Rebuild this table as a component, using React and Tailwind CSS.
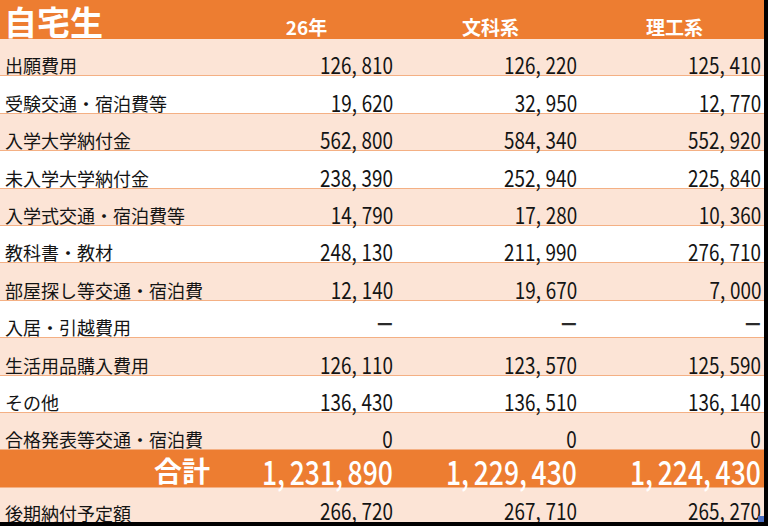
import React from "react";

const rows = [
  ["出願費用", "126,810", "126,220", "125,410"],
  ["受験交通・宿泊費等", "19,620", "32,950", "12,770"],
  ["入学大学納付金", "562,800", "584,340", "552,920"],
  ["未入学大学納付金", "238,390", "252,940", "225,840"],
  ["入学式交通・宿泊費等", "14,790", "17,280", "10,360"],
  ["教科書・教材", "248,130", "211,990", "276,710"],
  ["部屋探し等交通・宿泊費", "12,140", "19,670", "7,000"],
  ["入居・引越費用", "—", "—", "—"],
  ["生活用品購入費用", "126,110", "123,570", "125,590"],
  ["その他", "136,430", "136,510", "136,140"],
  ["合格発表等交通・宿泊費", "0", "0", "0"],
];

const jp = { fontFamily: '"Noto Sans CJK JP", "Noto Sans", sans-serif' };

function Spaced({ v }) {
  const parts = v.split(",");
  return parts.map((p, i) => (
    <React.Fragment key={i}>
      {p}
      {i < parts.length - 1 && <span className="mr-[6px]">,</span>}
    </React.Fragment>
  ));
}

function Num({ v, last }) {
  if (v === "—") {
    return (
      <div className="flex justify-end items-end pr-[3px] h-full pb-[4px]">
        <span className="inline-block origin-right scale-x-[0.72] text-[24px] leading-[24px] font-bold text-[#2a2a2a] whitespace-nowrap">
          —
        </span>
      </div>
    );
  }
  return (
    <div className={"flex justify-end items-end pr-[3px] h-full " + (last ? "pb-[1px]" : "")}>
      <span className="inline-block origin-right scale-x-[0.82] text-[23px] leading-[23px] text-[#141414] mb-[-1px] whitespace-nowrap">
        <Spaced v={v} />
      </span>
    </div>
  );
}

export default function App() {
  return (
    <div className="w-[768px] h-[526px] bg-black overflow-hidden" style={jp}>
      <div className="relative w-[764px] h-[522px] overflow-hidden bg-white">
        {/* header */}
        <div className="grid grid-cols-[212px_184px_184px_184px] h-[39px] bg-[#ed7d31] text-white">
          <div className="flex items-end pl-[4px]">
            <span className="text-[33px] leading-[36px] font-bold">自宅生</span>
          </div>
          {["26年", "文科系", "理工系"].map((h) => (
            <div key={h} className="flex items-end justify-center pl-[5px] pb-[2px]">
              <span className="text-[19px] leading-[20px] font-bold">{h}</span>
            </div>
          ))}
        </div>

        {rows.map((r, i) => (
          <div
            key={r[0]}
            className={
              "grid grid-cols-[212px_184px_184px_184px] h-[37.4px] border-b border-[#f4b084] " +
              (i % 2 === 0 ? "bg-[#fce4d6]" : "bg-white")
            }
          >
            <div className="flex items-end pl-[5px] pb-[1px]">
              <span className="text-[18px] leading-[18px] text-[#141414] whitespace-nowrap">{r[0]}</span>
            </div>
            <Num v={r[1]} />
            <Num v={r[2]} />
            <Num v={r[3]} />
          </div>
        ))}

        {/* total */}
        <div className="grid grid-cols-[212px_184px_184px_184px] h-[38px] bg-[#ed7d31] text-white border-b border-[#f4b084]">
          <div className="flex items-end justify-end pr-[2px] pb-[2px]">
            <span className="text-[28px] leading-[30px] font-bold">合計</span>
          </div>
          {["1,231,890", "1,229,430", "1,224,430"].map((v, i) => (
            <div key={i} className="flex justify-end items-end pr-[3px]">
              <span className="inline-block origin-right scale-x-[0.78] text-[34px] leading-[34px] font-medium mb-[-1px] whitespace-nowrap">
                <Spaced v={v} />
              </span>
            </div>
          ))}
        </div>

        {/* last row */}
        <div className="grid grid-cols-[212px_184px_184px_184px] h-[34px] bg-[#fce4d6]">
          <div className="flex items-end pl-[5px] pb-[0px]">
            <span className="text-[18px] leading-[18px] text-[#141414] whitespace-nowrap">後期納付予定額</span>
          </div>
          <Num v="266,720" last />
          <Num v="267,710" last />
          <Num v="265,270" last />
        </div>

        <div className="absolute right-0 bottom-0 w-[6px] h-[6px] bg-[#4a6fc4]" />
      </div>
    </div>
  );
}
